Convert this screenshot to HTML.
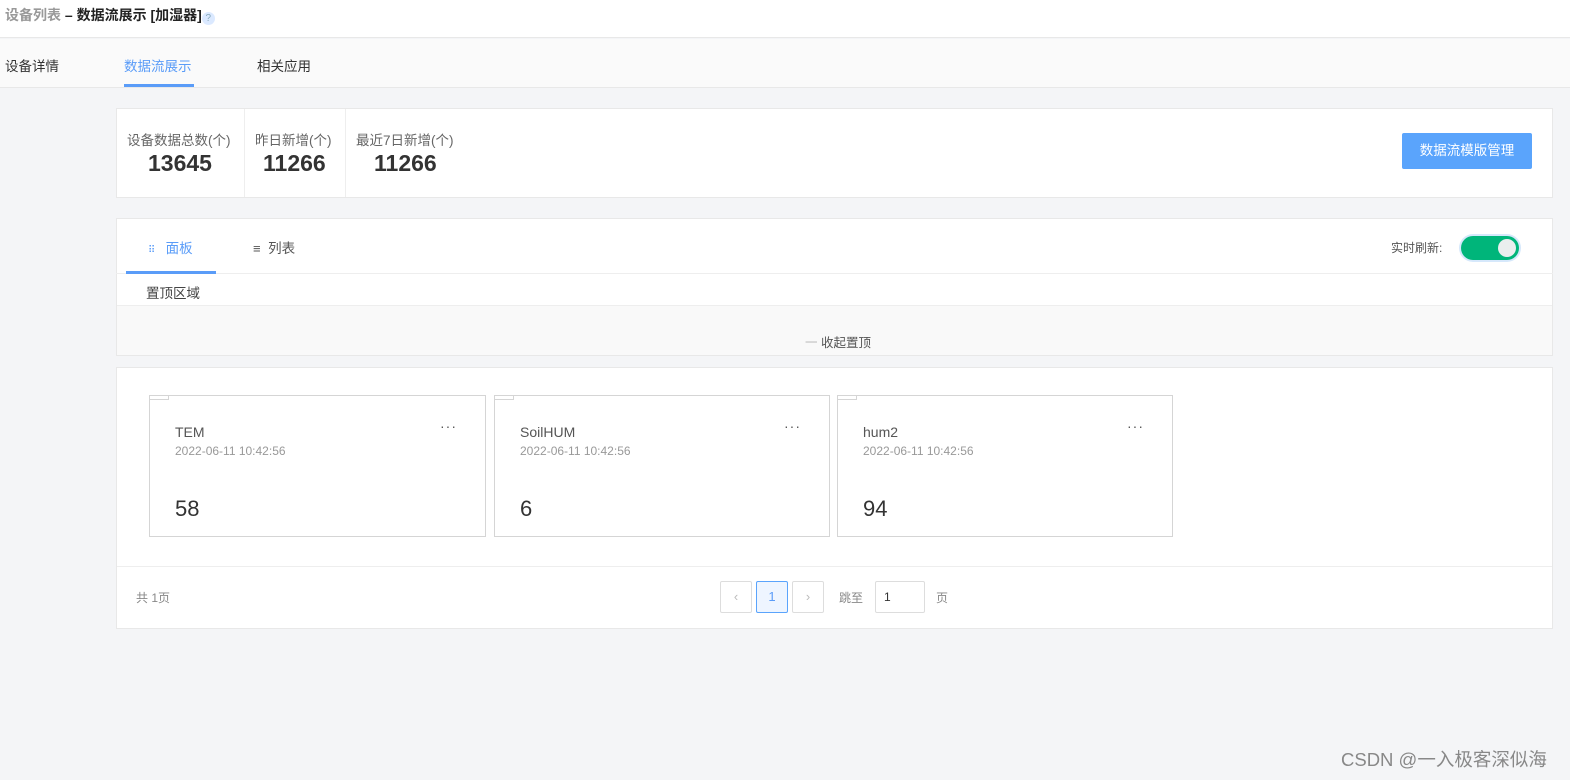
<!DOCTYPE html>
<html><head><meta charset="utf-8"><style>
*{box-sizing:border-box;margin:0;padding:0}
body{width:1570px;height:780px;background:#f4f5f7;font-family:"Liberation Sans","Noto Sans CJK SC",sans-serif;position:relative;overflow:hidden;color:#333}
.a{position:absolute}
.panel{position:absolute;background:#fff;border:1px solid #e8e8e8}
.card{position:absolute;top:395px;width:337px;height:142px;border:1px solid #d5d5d5;background:#fff}
.card .c{position:absolute;left:-1px;top:-1px;width:20px;height:5px;border:1px solid #d5d5d5;border-top:none;border-left:none}
.card .t{position:absolute;left:25px;top:28px;font-size:14px;color:#555}
.card .d{position:absolute;left:25px;top:48px;font-size:12px;color:#999}
.card .v{position:absolute;left:25px;top:100px;font-size:22px;color:#333}
.card .m{position:absolute;right:28px;top:22px;font-size:14px;color:#555;letter-spacing:1px}
.pg{position:absolute;top:581px;width:32px;height:32px;border:1px solid #ddd;border-radius:2px;text-align:center;line-height:30px;font-size:13px;color:#bbb}
</style></head><body>
<div class="a" style="left:0;top:0;width:1570px;height:38px;background:#fff;border-bottom:1px solid #e8e8e8"></div>
<div class="a" style="left:5px;top:5px;font-size:14px;font-weight:bold;color:#999">设备列表 <span style="color:#222">– 数据流展示 [加湿器]</span><span style="display:inline-block;width:13px;height:13px;border-radius:50%;background:#dbe9ff;color:#8ab;font-size:10px;text-align:center;line-height:13px;font-weight:normal;vertical-align:-1px">?</span></div>
<div class="a" style="left:0;top:39px;width:1570px;height:49px;background:#fafafa;border-bottom:1px solid #e8e8e8"></div>
<div class="a" style="left:5px;top:55px;font-size:13.5px;color:#333">设备详情</div>
<div class="a" style="left:124px;top:55px;font-size:13.5px;color:#5a9cf8">数据流展示</div>
<div class="a" style="left:124px;top:84px;width:70px;height:3px;background:#5a9cf8"></div>
<div class="a" style="left:257px;top:55px;font-size:13.5px;color:#333">相关应用</div>

<div class="panel" style="left:116px;top:108px;width:1437px;height:90px"></div>
<div class="a" style="left:244px;top:109px;width:1px;height:88px;background:#eee"></div>
<div class="a" style="left:345px;top:109px;width:1px;height:88px;background:#eee"></div>
<div class="a" style="left:127px;top:129px;font-size:13.5px;color:#666">设备数据总数(个)</div>
<div class="a" style="left:148px;top:150px;font-size:23px;font-weight:bold;color:#333">13645</div>
<div class="a" style="left:255px;top:129px;font-size:13.5px;color:#666">昨日新增(个)</div>
<div class="a" style="left:263px;top:150px;font-size:23px;font-weight:bold;color:#333">11266</div>
<div class="a" style="left:356px;top:129px;font-size:13.5px;color:#666">最近7日新增(个)</div>
<div class="a" style="left:374px;top:150px;font-size:23px;font-weight:bold;color:#333">11266</div>
<div class="a" style="left:1402px;top:133px;width:130px;height:36px;background:#5aa4fc;border-radius:2px;color:#fff;font-size:13.5px;text-align:center;line-height:36px">数据流模版管理</div>

<div class="panel" style="left:116px;top:218px;width:1437px;height:138px"></div>
<div class="a" style="left:116px;top:273px;width:1437px;height:1px;background:#eee"></div>
<div class="a" style="left:117px;top:305px;width:1435px;height:50px;background:#f9f9f9;border-top:1px solid #eee"></div>
<div class="a" style="left:148px;top:237px;font-size:13.5px;color:#5a9cf8"><span style="font-size:10px;letter-spacing:-1px">⠿</span>&nbsp;&nbsp;&nbsp;面板</div>
<div class="a" style="left:126px;top:271px;width:90px;height:3px;background:#5a9cf8"></div>
<div class="a" style="left:253px;top:237px;font-size:13.5px;color:#555"><span style="font-size:13px">≡</span>&nbsp;&nbsp;列表</div>
<div class="a" style="left:146px;top:282px;font-size:13.5px;color:#444">置顶区域</div>
<div class="a" style="left:805px;top:332px;font-size:12.5px;color:#555"><span style="color:#bbb">一</span> 收起置顶</div>
<div class="a" style="left:1391px;top:239px;font-size:12px;color:#555">实时刷新:</div>
<div class="a" style="left:1461px;top:236px;width:58px;height:24px;border-radius:12px;background:#00b57a;box-shadow:0 0 0 2px #d6e8fb"><div class="a" style="right:3px;top:3px;width:18px;height:18px;border-radius:50%;background:#eaeeee"></div></div>

<div class="panel" style="left:116px;top:367px;width:1437px;height:262px"></div>
<div class="a" style="left:117px;top:566px;width:1435px;height:1px;background:#eee"></div>
<div class="card" style="left:149px"><div class="c"></div><div class="t">TEM</div><div class="d">2022-06-11 10:42:56</div><div class="v">58</div><div class="m">···</div></div>
<div class="card" style="left:494px;width:336px"><div class="c"></div><div class="t">SoilHUM</div><div class="d">2022-06-11 10:42:56</div><div class="v">6</div><div class="m">···</div></div>
<div class="card" style="left:837px;width:336px"><div class="c"></div><div class="t">hum2</div><div class="d">2022-06-11 10:42:56</div><div class="v">94</div><div class="m">···</div></div>

<div class="a" style="left:136px;top:589px;font-size:12px;color:#888">共 1页</div>
<div class="pg" style="left:720px">‹</div>
<div class="pg" style="left:756px;border-color:#5aa4fc;background:#eef5ff;color:#5a9cf8">1</div>
<div class="pg" style="left:792px">›</div>
<div class="a" style="left:839px;top:589px;font-size:12px;color:#888">跳至</div>
<div class="a" style="left:875px;top:581px;width:50px;height:32px;border:1px solid #ddd;border-radius:2px;font-size:12px;line-height:30px;padding-left:8px;color:#333">1</div>
<div class="a" style="left:936px;top:589px;font-size:12px;color:#888">页</div>

<div class="a" style="left:1341px;top:746px;font-size:18.5px;color:#888">CSDN @一入极客深似海</div>
</body></html>
